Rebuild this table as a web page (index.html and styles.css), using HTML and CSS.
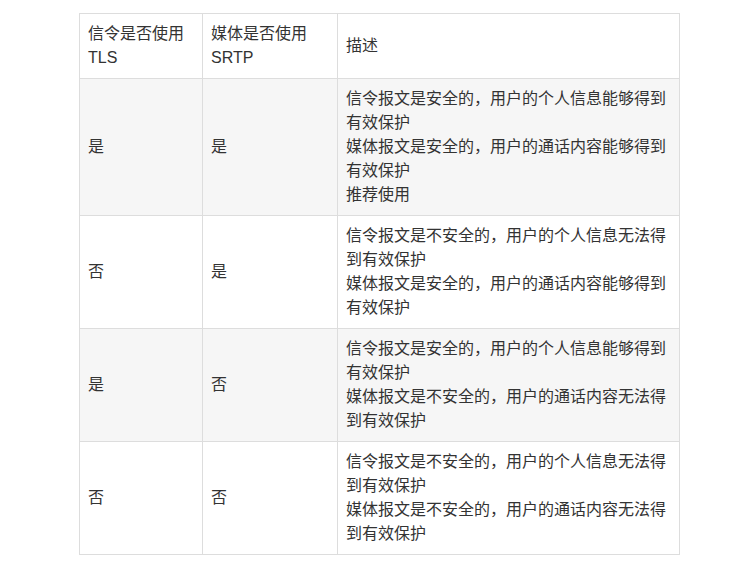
FILE: index.html
```html
<!DOCTYPE html>
<html lang="zh">
<head>
<meta charset="utf-8">
<link rel="stylesheet" href="styles.css">
</head>
<body>
<table class="tbl">
  <colgroup>
    <col class="c1">
    <col class="c2">
    <col class="c3">
  </colgroup>
  <tr class="head">
    <td>信令是否使用TLS</td>
    <td>媒体是否使用SRTP</td>
    <td>描述</td>
  </tr>
  <tr class="alt">
    <td>是</td>
    <td>是</td>
    <td>信令报文是安全的，用户的个人信息能够得到有效保护<br>媒体报文是安全的，用户的通话内容能够得到有效保护<br>推荐使用</td>
  </tr>
  <tr>
    <td>否</td>
    <td>是</td>
    <td>信令报文是不安全的，用户的个人信息无法得到有效保护<br>媒体报文是安全的，用户的通话内容能够得到有效保护</td>
  </tr>
  <tr class="alt">
    <td>是</td>
    <td>否</td>
    <td>信令报文是安全的，用户的个人信息能够得到有效保护<br>媒体报文是不安全的，用户的通话内容无法得到有效保护</td>
  </tr>
  <tr>
    <td>否</td>
    <td>否</td>
    <td>信令报文是不安全的，用户的个人信息无法得到有效保护<br>媒体报文是不安全的，用户的通话内容无法得到有效保护</td>
  </tr>
</table>
</body>
</html>
```
FILE: styles.css
```css
html, body {
  margin: 0;
  padding: 0;
  background: #fff;
}
body {
  padding: 13px 0 0 79px;
  font-family: "Liberation Sans", "Noto Sans CJK SC", sans-serif;
  font-size: 16px;
  color: #333;
}
.tbl {
  border-collapse: collapse;
  table-layout: fixed;
  width: 600px;
}
.c1 { width: 123px; }
.c2 { width: 135px; }
.c3 { width: 342px; }
.tbl td {
  border: 1px solid #ddd;
  padding: 8px 8px;
  line-height: 24px;
  vertical-align: middle;
  text-align: left;
}
.tbl tr.alt td {
  background: #f6f6f6;
}
```
